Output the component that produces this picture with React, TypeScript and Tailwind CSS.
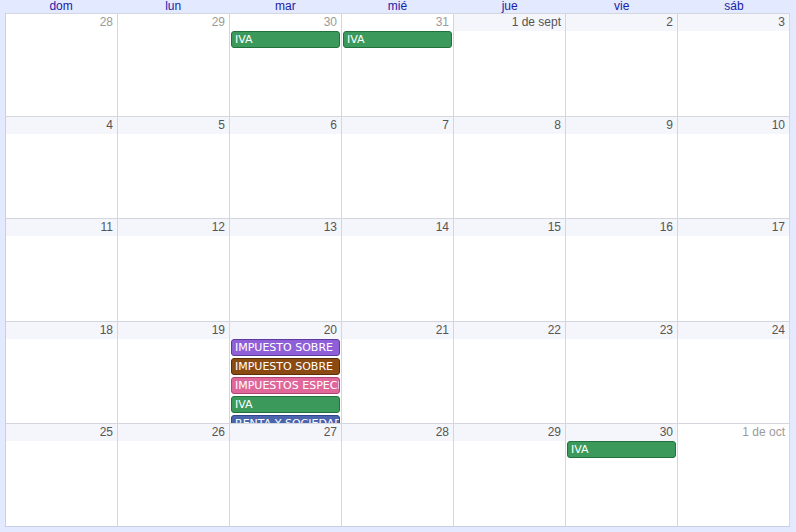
import React from 'react'

type Ev = { title: string; color: string; border: string }

const green: Ev = { title: 'IVA', color: 'bg-[#3b9a5b]', border: 'border-[#22703c]' }

const headers = ['dom', 'lun', 'mar', 'mié', 'jue', 'vie', 'sáb']

type Day = { label: string; muted?: boolean; events?: Ev[] }

const weeks: Day[][] = [
  [
    { label: '28', muted: true },
    { label: '29', muted: true },
    { label: '30', muted: true, events: [green] },
    { label: '31', muted: true, events: [green] },
    { label: '1 de sept' },
    { label: '2' },
    { label: '3' },
  ],
  [{ label: '4' }, { label: '5' }, { label: '6' }, { label: '7' }, { label: '8' }, { label: '9' }, { label: '10' }],
  [{ label: '11' }, { label: '12' }, { label: '13' }, { label: '14' }, { label: '15' }, { label: '16' }, { label: '17' }],
  [
    { label: '18' },
    { label: '19' },
    {
      label: '20',
      events: [
        { title: 'IMPUESTO SOBRE', color: 'bg-[#8e5fd6]', border: 'border-[#5e3aa0]' },
        { title: 'IMPUESTO SOBRE', color: 'bg-[#8a4a12]', border: 'border-[#5c2f08]' },
        { title: 'IMPUESTOS ESPECIALES', color: 'bg-[#e0679a]', border: 'border-[#b04474]' },
        green,
        { title: 'RENTA Y SOCIEDADES', color: 'bg-[#4a65ad]', border: 'border-[#2e4683]' },
      ],
    },
    { label: '21' },
    { label: '22' },
    { label: '23' },
    { label: '24' },
  ],
  [
    { label: '25' },
    { label: '26' },
    { label: '27' },
    { label: '28' },
    { label: '29' },
    { label: '30', events: [green] },
    { label: '1 de oct', muted: true },
  ],
]

export default function App() {
  return (
    <div className="flex h-[532px] w-[796px] flex-col overflow-hidden bg-[#e3e9fe] pb-[5px] pl-[5px] pr-[6px] font-['Liberation_Sans',Arial,sans-serif] text-[12px]">
      <div className="grid h-[13px] shrink-0 grid-cols-7 leading-[13px] text-[#1c1ca8]">
        {headers.map((h) => (
          <div key={h} className="text-center">
            {h}
          </div>
        ))}
      </div>
      <div className="grid min-h-0 flex-1 grid-rows-[repeat(5,minmax(0,1fr))] border-b border-l border-[#c6cfe6] bg-white">
        {weeks.map((week, wi) => (
          <div key={wi} className="grid min-h-0 grid-cols-7 overflow-hidden border-t border-[#d3d6de]">
            {week.map((d, di) => (
              <div key={di} className="flex min-h-0 min-w-0 flex-col overflow-hidden border-r border-[#d3d6de]">
                <div
                  className={
                    d.muted
                      ? 'h-[17px] shrink-0 pr-[4px] text-right leading-[17px] text-[#9a9a9a]'
                      : 'h-[17px] shrink-0 bg-[#f4f6fc] pr-[4px] text-right leading-[17px] text-[#555555]'
                  }
                >
                  {d.label}
                </div>
                <div className="flex flex-col gap-[2px] pl-[1px] pr-[1px]">
                  {(d.events || []).map((e, ei) => (
                    <div
                      key={ei}
                      className={`h-[17px] shrink-0 overflow-hidden whitespace-nowrap rounded-[3px] border pl-[3px] font-['DejaVu_Sans',sans-serif] text-[11px] leading-[15px] text-white ${e.color} ${e.border}`}
                    >
                      {e.title}
                    </div>
                  ))}
                </div>
              </div>
            ))}
          </div>
        ))}
      </div>
    </div>
  )
}
